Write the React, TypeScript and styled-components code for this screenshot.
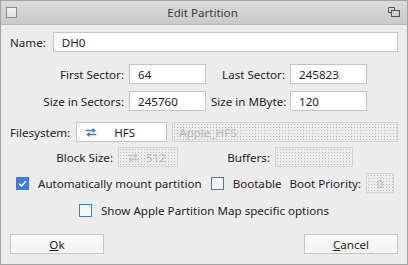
import React from 'react';
import styled, { createGlobalStyle } from 'styled-components';

const GlobalStyle = createGlobalStyle`
  html, body {
    margin: 0;
    padding: 0;
    background: #ececec;
  }
  body {
    font-family: "Noto Sans", "DejaVu Sans", sans-serif;
    font-size: 11.6px;
    color: #1e1e1e;
  }
  * {
    box-sizing: border-box;
  }
`;

const Window = styled.div`
  width: 408px;
  height: 265px;
  border: 1px solid #a4a4a4;
  background: #ececec;
  display: flex;
  flex-direction: column;
`;

const TitleBar = styled.div`
  height: 24px;
  flex: none;
  display: flex;
  align-items: center;
  padding: 0 7px 0 5px;
  background: linear-gradient(#dcdcdc, #c9c9c9);
  border-bottom: 1px solid #b8b8b8;
`;

const TitleText = styled.div`
  flex: 1;
  text-align: center;
  color: #3a3a3a;
`;

const CloseBox = styled.div`
  width: 11px;
  height: 11px;
  border: 1px solid #8a8a8a;
  background: linear-gradient(#f4f4f4, #dedede);
`;

const Content = styled.div`
  flex: 1;
  display: flex;
  flex-direction: column;
  padding: 6px 9px 0 9px;
`;

const Row = styled.div<{ $top: number; $pad?: number; $center?: boolean }>`
  display: flex;
  align-items: center;
  margin-top: ${({ $top }) => $top}px;
  padding-left: ${({ $pad }) => $pad ?? 0}px;
  justify-content: ${({ $center }) => ($center ? 'center' : 'flex-start')};
`;

const Label = styled.span<{ $width?: number; $gap?: number }>`
  flex: none;
  white-space: nowrap;
  width: ${({ $width }) => ($width ? `${$width}px` : 'auto')};
  text-align: ${({ $width }) => ($width ? 'right' : 'left')};
  padding-right: ${({ $gap }) => $gap ?? 5}px;
`;

const Input = styled.div<{ $width?: number }>`
  height: 20px;
  background: #ffffff;
  border: 1px solid #c4c4c4;
  padding: 0 8px;
  display: flex;
  align-items: center;
  flex: ${({ $width }) => ($width ? 'none' : '1')};
  width: ${({ $width }) => ($width ? `${$width}px` : 'auto')};
`;

const Disabled = styled.div<{ $width?: number; $center?: boolean }>`
  height: 20px;
  border: 1px solid #d2d2d2;
  background-color: #ececec;
  background-image: radial-gradient(circle, #b9b9b9 0.7px, transparent 0.8px);
  background-size: 3px 3px;
  color: #b6b6b6;
  padding: 0 6px;
  display: flex;
  align-items: center;
  justify-content: ${({ $center }) => ($center ? 'center' : 'flex-start')};
  flex: ${({ $width }) => ($width ? 'none' : '1')};
  width: ${({ $width }) => ($width ? `${$width}px` : 'auto')};
`;

const SectorGrid = styled.div`
  display: grid;
  grid-template-columns: 114px 77px 74px 77px;
  grid-auto-rows: 20px;
  column-gap: 5px;
  row-gap: 7px;
  margin-top: 12px;
  align-items: center;
`;

const GridLabel = styled.span`
  text-align: right;
  white-space: nowrap;
`;

const Combo = styled.div<{ $width: number }>`
  width: ${({ $width }) => $width}px;
  height: 20px;
  flex: none;
  background: #ffffff;
  border: 1px solid #c4c4c4;
  display: flex;
  align-items: center;
  padding-left: 8px;
`;

const ComboText = styled.span`
  flex: 1;
  text-align: center;
  padding-right: 14px;
`;

const DisabledCombo = styled(Disabled)`
  padding: 0 11px 0 8px;
  justify-content: space-between;
`;

const Check = styled.span<{ $checked?: boolean }>`
  width: 13px;
  height: 13px;
  flex: none;
  border: 1px solid #3c7be0;
  background: ${({ $checked }) => ($checked ? '#3c7be0' : '#f6f6f6')};
  display: flex;
  align-items: center;
  justify-content: center;
`;

const CheckLabel = styled.span<{ $gap?: number }>`
  margin-left: 9px;
  margin-right: ${({ $gap }) => $gap ?? 0}px;
  white-space: nowrap;
`;

const ButtonRow = styled.div`
  display: flex;
  justify-content: space-between;
  margin-top: 16px;
`;

const Button = styled.div`
  width: 94px;
  height: 20px;
  background: linear-gradient(#fbfbfb, #f2f2f2);
  border: 1px solid #c6c6c6;
  display: flex;
  align-items: center;
  justify-content: center;
`;

const Mnemonic = styled.span`
  text-decoration: underline;
`;

const SwapIcon = ({ color }: { color: string }) => (
  <svg width="12" height="11" viewBox="0 0 12 11" fill="none">
    <path d="M0.5 3.5H10" stroke={color} strokeWidth="1.4" />
    <path d="M7.5 0.8L10.5 3.5L7.5 6.2" fill={color} />
    <path d="M11.5 7.5H2" stroke={color} strokeWidth="1.4" />
    <path d="M4.5 4.8L1.5 7.5L4.5 10.2" fill={color} />
  </svg>
);

const RestoreIcon = () => (
  <svg width="12" height="11" viewBox="0 0 12 11" fill="none">
    <path d="M0.5 0.5H6.5V3" stroke="#555" />
    <path d="M0.5 0.5V5.5H3" stroke="#555" />
    <rect x="3.5" y="3.5" width="8" height="6" stroke="#555" />
  </svg>
);

const Tick = () => (
  <svg width="9" height="7" viewBox="0 0 9 7" fill="none">
    <path d="M1 3.5L3.5 6L8 1" stroke="#ffffff" strokeWidth="1.5" />
  </svg>
);

export default function App() {
  return (
    <>
      <GlobalStyle />
      <Window>
        <TitleBar>
          <CloseBox />
          <TitleText>Edit Partition</TitleText>
          <RestoreIcon />
        </TitleBar>
        <Content>
          <Row $top={1}>
            <Label $gap={7}>Name:</Label>
            <Input>DH0</Input>
          </Row>

          <SectorGrid>
            <GridLabel>First Sector:</GridLabel>
            <Input $width={77}>64</Input>
            <GridLabel>Last Sector:</GridLabel>
            <Input $width={77}>245823</Input>
            <GridLabel>Size in Sectors:</GridLabel>
            <Input $width={77}>245760</Input>
            <GridLabel>Size in MByte:</GridLabel>
            <Input $width={77}>120</Input>
          </SectorGrid>

          <Row $top={11}>
            <Label $gap={6}>Filesystem:</Label>
            <Combo $width={91}>
              <SwapIcon color="#3c78d8" />
              <ComboText>HFS</ComboText>
            </Combo>
            <Disabled style={{ marginLeft: 5 }}>Apple_HFS</Disabled>
          </Row>

          <Row $top={5}>
            <Label $width={108}>Block Size:</Label>
            <DisabledCombo $width={60}>
              <SwapIcon color="#c2c2c2" />
              <span>512</span>
            </DisabledCombo>
            <Label $width={97}>Buffers:</Label>
            <Disabled $width={78} />
          </Row>

          <Row $top={6} $pad={6}>
            <Check $checked>
              <Tick />
            </Check>
            <CheckLabel $gap={9}>Automatically mount partition</CheckLabel>
            <Check />
            <CheckLabel $gap={8}>Bootable</CheckLabel>
            <Label>Boot Priority:</Label>
            <Disabled $width={28} $center>0</Disabled>
          </Row>

          <Row $top={10} $center>
            <Check />
            <CheckLabel>Show Apple Partition Map specific options</CheckLabel>
          </Row>

          <ButtonRow>
            <Button>
              <Mnemonic>O</Mnemonic>k
            </Button>
            <Button>
              <Mnemonic>C</Mnemonic>ancel
            </Button>
          </ButtonRow>
        </Content>
      </Window>
    </>
  );
}
